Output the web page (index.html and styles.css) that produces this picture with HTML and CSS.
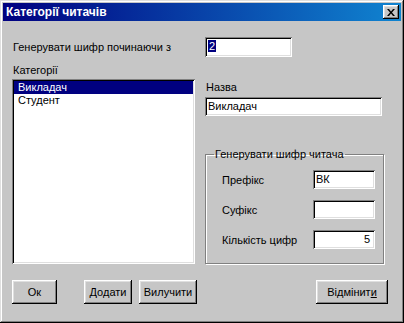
FILE: index.html
```html
<!DOCTYPE html>
<html lang="uk">

<head>
    <meta charset="utf-8">
    <title>Категорії читачів</title>
    <link rel="stylesheet" href="styles.css">
</head>

<body>
    <div class="vindu">
        <div class="tittel">
            <span>Категорії читачів</span>
            <div class="lukk">
                <svg width="8" height="7" viewBox="0 0 8 7">
                    <path d="M0 0h2l2 2.5L6 0h2L5 3.5 8 7H6L4 4.5 2 7H0l3-3.5z" fill="#000"/>
                </svg>
            </div>
        </div>

        <div class="innhold">
            <div class="rad-start">
                <span class="etikett">Генерувати шифр починаючи з</span>
                <div class="felt start"><span class="merket">2</span></div>
            </div>

            <div class="hoved">
                <div class="venstre">
                    <div class="etikett">Категорії</div>
                    <div class="liste">
                        <div class="element valgt">Викладач</div>
                        <div class="element">Студент</div>
                    </div>
                </div>

                <div class="hoyre">
                    <div class="etikett navn">Назва</div>
                    <div class="felt bred">Викладач</div>

                    <fieldset class="gruppe">
                        <legend>Генерувати шифр читача</legend>
                        <div class="gruppe-rad">
                            <span>Префікс</span>
                            <div class="felt kort">ВК</div>
                        </div>
                        <div class="gruppe-rad">
                            <span>Суфікс</span>
                            <div class="felt kort"></div>
                        </div>
                        <div class="gruppe-rad">
                            <span>Кількість цифр</span>
                            <div class="felt kort hoyrejust">5</div>
                        </div>
                    </fieldset>
                </div>
            </div>

            <div class="knapper">
                <button class="ok">Ок</button>
                <button class="legg-til">Додати</button>
                <button class="slett">Вилучити</button>
                <button class="avbryt">Відмінит<u>и</u></button>
            </div>
        </div>
    </div>
</body>

</html>
```

FILE: styles.css
```css
* {
    box-sizing: border-box;
}

body {
    margin: 0;
    font-family: "Liberation Sans", Arial, sans-serif;
    font-size: 11px;
    color: #000;
    background-color: #c6c6c6;
}

.vindu {
    width: 404px;
    height: 323px;
    padding: 3px;
    background-color: #c6c6c6;
    box-shadow: inset -1px -1px #000, inset 1px 1px #dfdfdf, inset -2px -2px #808080, inset 2px 2px #fff;
}

.tittel {
    height: 18px;
    display: flex;
    align-items: center;
    justify-content: space-between;
    padding: 0 2px 0 3px;
    background: linear-gradient(to right, #000080, #1084d0);
    color: #fff;
    font-weight: bold;
    font-size: 12px;
}

.lukk {
    width: 16px;
    height: 14px;
    display: flex;
    align-items: center;
    justify-content: center;
    background-color: #c6c6c6;
    box-shadow: inset -1px -1px #000, inset 1px 1px #fff, inset -2px -2px #808080, inset 2px 2px #dfdfdf;
}

.innhold {
    padding: 16px 0 0 9px;
}

.etikett {
    line-height: 14px;
    padding-left: 1px;
}

.felt {
    height: 19px;
    background-color: #fff;
    padding: 3px 3px 0 3px;
    line-height: 13px;
    white-space: nowrap;
    box-shadow: inset 1px 1px #808080, inset -1px -1px #fff, inset 2px 2px #000, inset -2px -2px #dfdfdf;
}

.rad-start {
    display: flex;
    align-items: center;
}

.rad-start .etikett {
    width: 193px;
}

.start {
    width: 87px;
    height: 20px;
}

.merket {
    background-color: #000080;
    color: #fff;
    padding: 0 1px;
}

.hoved {
    display: flex;
    margin-top: 6px;
}

.venstre {
    width: 183px;
}

.venstre .etikett {
    margin-bottom: 2px;
}

.liste {
    height: 185px;
    background-color: #fff;
    padding: 2px;
    box-shadow: inset 1px 1px #808080, inset -1px -1px #fff, inset 2px 2px #000, inset -2px -2px #dfdfdf;
}

.element {
    height: 13px;
    line-height: 13px;
    padding-left: 4px;
}

.valgt {
    background-color: #000080;
    color: #fff;
}

.hoyre {
    width: 179px;
    margin-left: 10px;
}

.navn {
    margin-top: 17px;
    margin-bottom: 3px;
}

.bred {
    width: 177px;
}

.gruppe {
    margin: 32px 0 0 0;
    padding: 10px 8px 0 16px;
    height: 116px;
    border: 1px solid #808080;
    box-shadow: inset 1px 1px #fff, 1px 1px #fff;
    width: 179px;
}

.gruppe legend {
    padding: 0 1px;
    margin-left: -8px;
    line-height: 12px;
}

.gruppe-rad {
    display: flex;
    align-items: center;
    justify-content: space-between;
    margin-bottom: 11px;
}

.kort {
    width: 62px;
}

.hoyrejust {
    text-align: right;
    padding-right: 5px;
}

.knapper {
    display: flex;
    margin-top: 16px;
}

button {
    font-family: "Liberation Sans", Arial, sans-serif;
    font-size: 11px;
    height: 24px;
    padding: 0;
    border: none;
    color: #000;
    background-color: #c6c6c6;
    box-shadow: inset -1px -1px #000, inset 1px 1px #fff, inset -2px -2px #808080, inset 2px 2px #dfdfdf;
}

.ok {
    width: 45px;
}

.legg-til {
    width: 48px;
    margin-left: 27px;
}

.slett {
    width: 58px;
    margin-left: 7px;
}

.avbryt {
    width: 72px;
    margin-left: 119px;
}
```
